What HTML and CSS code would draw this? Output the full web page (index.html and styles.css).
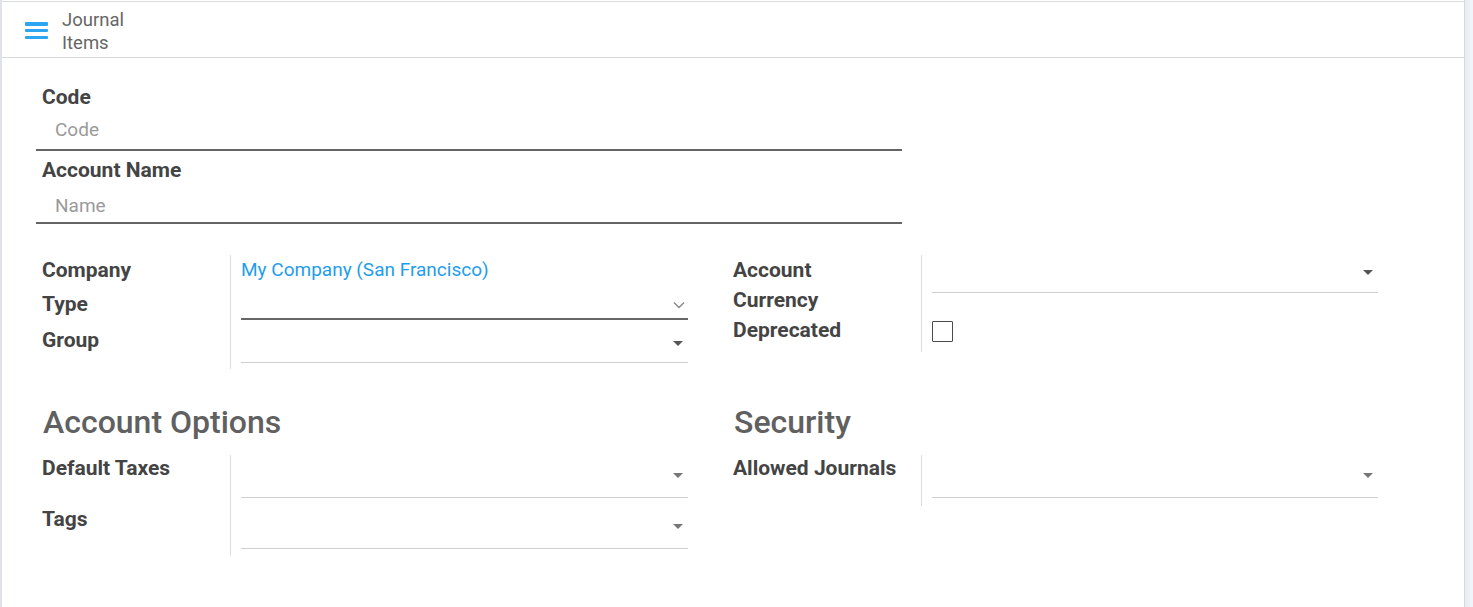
FILE: index.html
```html
<!DOCTYPE html>
<html>
<head>
<meta charset="utf-8">
<title>Journal Items</title>
<link rel="stylesheet" href="styles.css">
</head>
<body>
<div class="app">
  <div class="main">
    <header class="topbar">
      <button class="menu-btn" aria-label="Menu">
        <span></span><span></span><span></span>
      </button>
      <div class="crumb">Journal<br>Items</div>
    </header>
    <div class="sheet">
      <div class="title-field">
        <div class="big-label">Code</div>
        <div class="line-input"><span class="placeholder">Code</span></div>
      </div>
      <div class="title-field second">
        <div class="big-label">Account Name</div>
        <div class="line-input"><span class="placeholder">Name</span></div>
      </div>

      <div class="columns first-columns">
        <div class="group">
          <div class="lbl r-company">Company</div>
          <div class="cell r-company"><span class="link">My Company (San Francisco)</span></div>
          <div class="lbl r-type">Type</div>
          <div class="cell r-type"><div class="select focused"><svg class="chev" width="12" height="8" viewBox="0 0 12 8"><path d="M1 1.5 L6 6.5 L11 1.5" fill="none" stroke="#888" stroke-width="1.4"/></svg></div></div>
          <div class="lbl r-group">Group</div>
          <div class="cell r-group last"><div class="select m2o g-group"><span class="caret"></span></div></div>
        </div>
        <div class="group">
          <div class="lbl r-acc">Account<br>Currency</div>
          <div class="cell r-acc"><div class="select m2o g-acc"><span class="caret"></span></div></div>
          <div class="lbl r-dep">Deprecated</div>
          <div class="cell r-dep last"><span class="checkbox"></span></div>
        </div>
      </div>

      <div class="columns second-columns">
        <div class="section">
          <h2>Account Options</h2>
          <div class="group">
            <div class="lbl r-tax">Default Taxes</div>
            <div class="cell r-tax"><div class="select m2o g-tax"><span class="caret"></span></div></div>
            <div class="lbl r-tags">Tags</div>
            <div class="cell r-tags last"><div class="select m2o g-tags"><span class="caret"></span></div></div>
          </div>
        </div>
        <div class="section">
          <h2>Security</h2>
          <div class="group">
            <div class="lbl r-tax">Allowed Journals</div>
            <div class="cell r-tax last sec"><div class="select m2o g-tax"><span class="caret"></span></div></div>
          </div>
        </div>
      </div>
    </div>
  </div>
  <div class="scroll-strip"></div>
</div>
</body>
</html>
```
FILE: styles.css
```css
html, body {
  margin: 0;
  padding: 0;
  height: 100%;
  background: #ffffff;
  font-family: Roboto, "Noto Sans", Arial, sans-serif;
  color: #4a4a4a;
}
.app {
  display: flex;
  height: 607px;
  overflow: hidden;
}
.main {
  width: 1465px;
  border-left: 2px solid #dfe3e8;
  border-right: 1px solid #d6d9dd;
  box-sizing: border-box;
}
.scroll-strip {
  flex: 1;
  background: linear-gradient(to right, #e9edf2, #f2f5f8);
}
.topbar {
  height: 57px;
  box-sizing: border-box;
  border-top: 1px solid #d9dcdf;
  border-bottom: 1px solid #d7d9dc;
  margin-top: 1px;
  display: flex;
  align-items: flex-start;
}
.menu-btn {
  border: 0;
  background: none;
  padding: 0;
  margin: 20px 0 0 23px;
  width: 23px;
  height: 17px;
  display: flex;
  flex-direction: column;
  justify-content: space-between;
}
.menu-btn span {
  display: block;
  height: 3.5px;
  width: 23px;
  background: #2ca6f2;
  border-radius: 1px;
}
.crumb {
  margin: 7px 0 0 14px;
  font-size: 18.5px;
  line-height: 23px;
  color: #666;
}
.sheet {
  padding: 27px 0 0 34px;
}
.title-field {
  width: 866px;
}
.title-field.second {
  margin-top: 7px;
}
.big-label {
  padding-left: 6px;
  font-size: 21px;
  font-weight: 700;
  line-height: 24px;
  color: #444;
}
.line-input {
  height: 42px;
  box-sizing: border-box;
  border-bottom: 2px solid #646464;
  padding: 9px 0 0 19px;
}
.second .line-input {
  padding-top: 12px;
}
.placeholder {
  font-size: 19px;
  color: #9a9a9a;
  line-height: 24px;
}
.columns {
  display: grid;
  grid-template-columns: 646px 645px;
  column-gap: 45px;
  padding-left: 6px;
}
.first-columns {
  margin-top: 31px;
  align-items: start;
}
.second-columns {
  margin-top: 36px;
}
.group {
  display: grid;
  grid-template-columns: 188px 1fr;
}
.lbl {
  font-size: 21px;
  font-weight: 700;
  line-height: 30px;
  color: #444;
}
.cell {
  border-left: 1px solid #dcdcdc;
  padding-left: 10px;
}
.cell.last {
  padding-bottom: 6px;
}
.link {
  display: block;
  color: #1f9ded;
  font-size: 19px;
  line-height: 28px;
  padding-top: 1px;
}
.r-type.lbl { padding-top: 4px; }
.r-group.lbl { padding-top: 5px; }
.select {
  position: relative;
  box-sizing: border-box;
  border-bottom: 1px solid #cfcfcf;
}
.select.focused {
  height: 35px;
  border-bottom: 2px solid #666;
}
.chev {
  position: absolute;
  right: 3px;
  top: 16px;
}
.g-group { height: 43px; }
.g-acc { height: 38px; }
.g-tax { height: 43px; }
.g-tags { height: 43px; }
.caret {
  position: absolute;
  right: 5px;
  width: 0;
  height: 0;
  border-left: 5px solid transparent;
  border-right: 5px solid transparent;
  border-top: 5px solid #555;
}
.g-group .caret { top: 21px; }
.g-acc .caret { top: 15px; }
.g-tax .caret { top: 18px; border-top-color: #777; }
.g-tags .caret { top: 18px; border-top-color: #777; }
.r-dep.cell { padding-top: 6px; padding-bottom: 10px; }
.checkbox {
  display: block;
  width: 21px;
  height: 21px;
  box-sizing: border-box;
  border: 1.5px solid #4a4a4a;
  border-radius: 1px;
}
.section h2 {
  margin: 0 0 16px 1px;
  font-size: 32px;
  font-weight: 500;
  line-height: 34px;
  color: #606060;
}
.r-tax.lbl { margin-top: -2px; }
.r-tags.lbl { padding-top: 6px; }
.r-tags.cell { padding-top: 8px; }
.r-tags.cell.last { padding-bottom: 7px; }
.r-tax.cell.sec { padding-bottom: 8px; }
```
